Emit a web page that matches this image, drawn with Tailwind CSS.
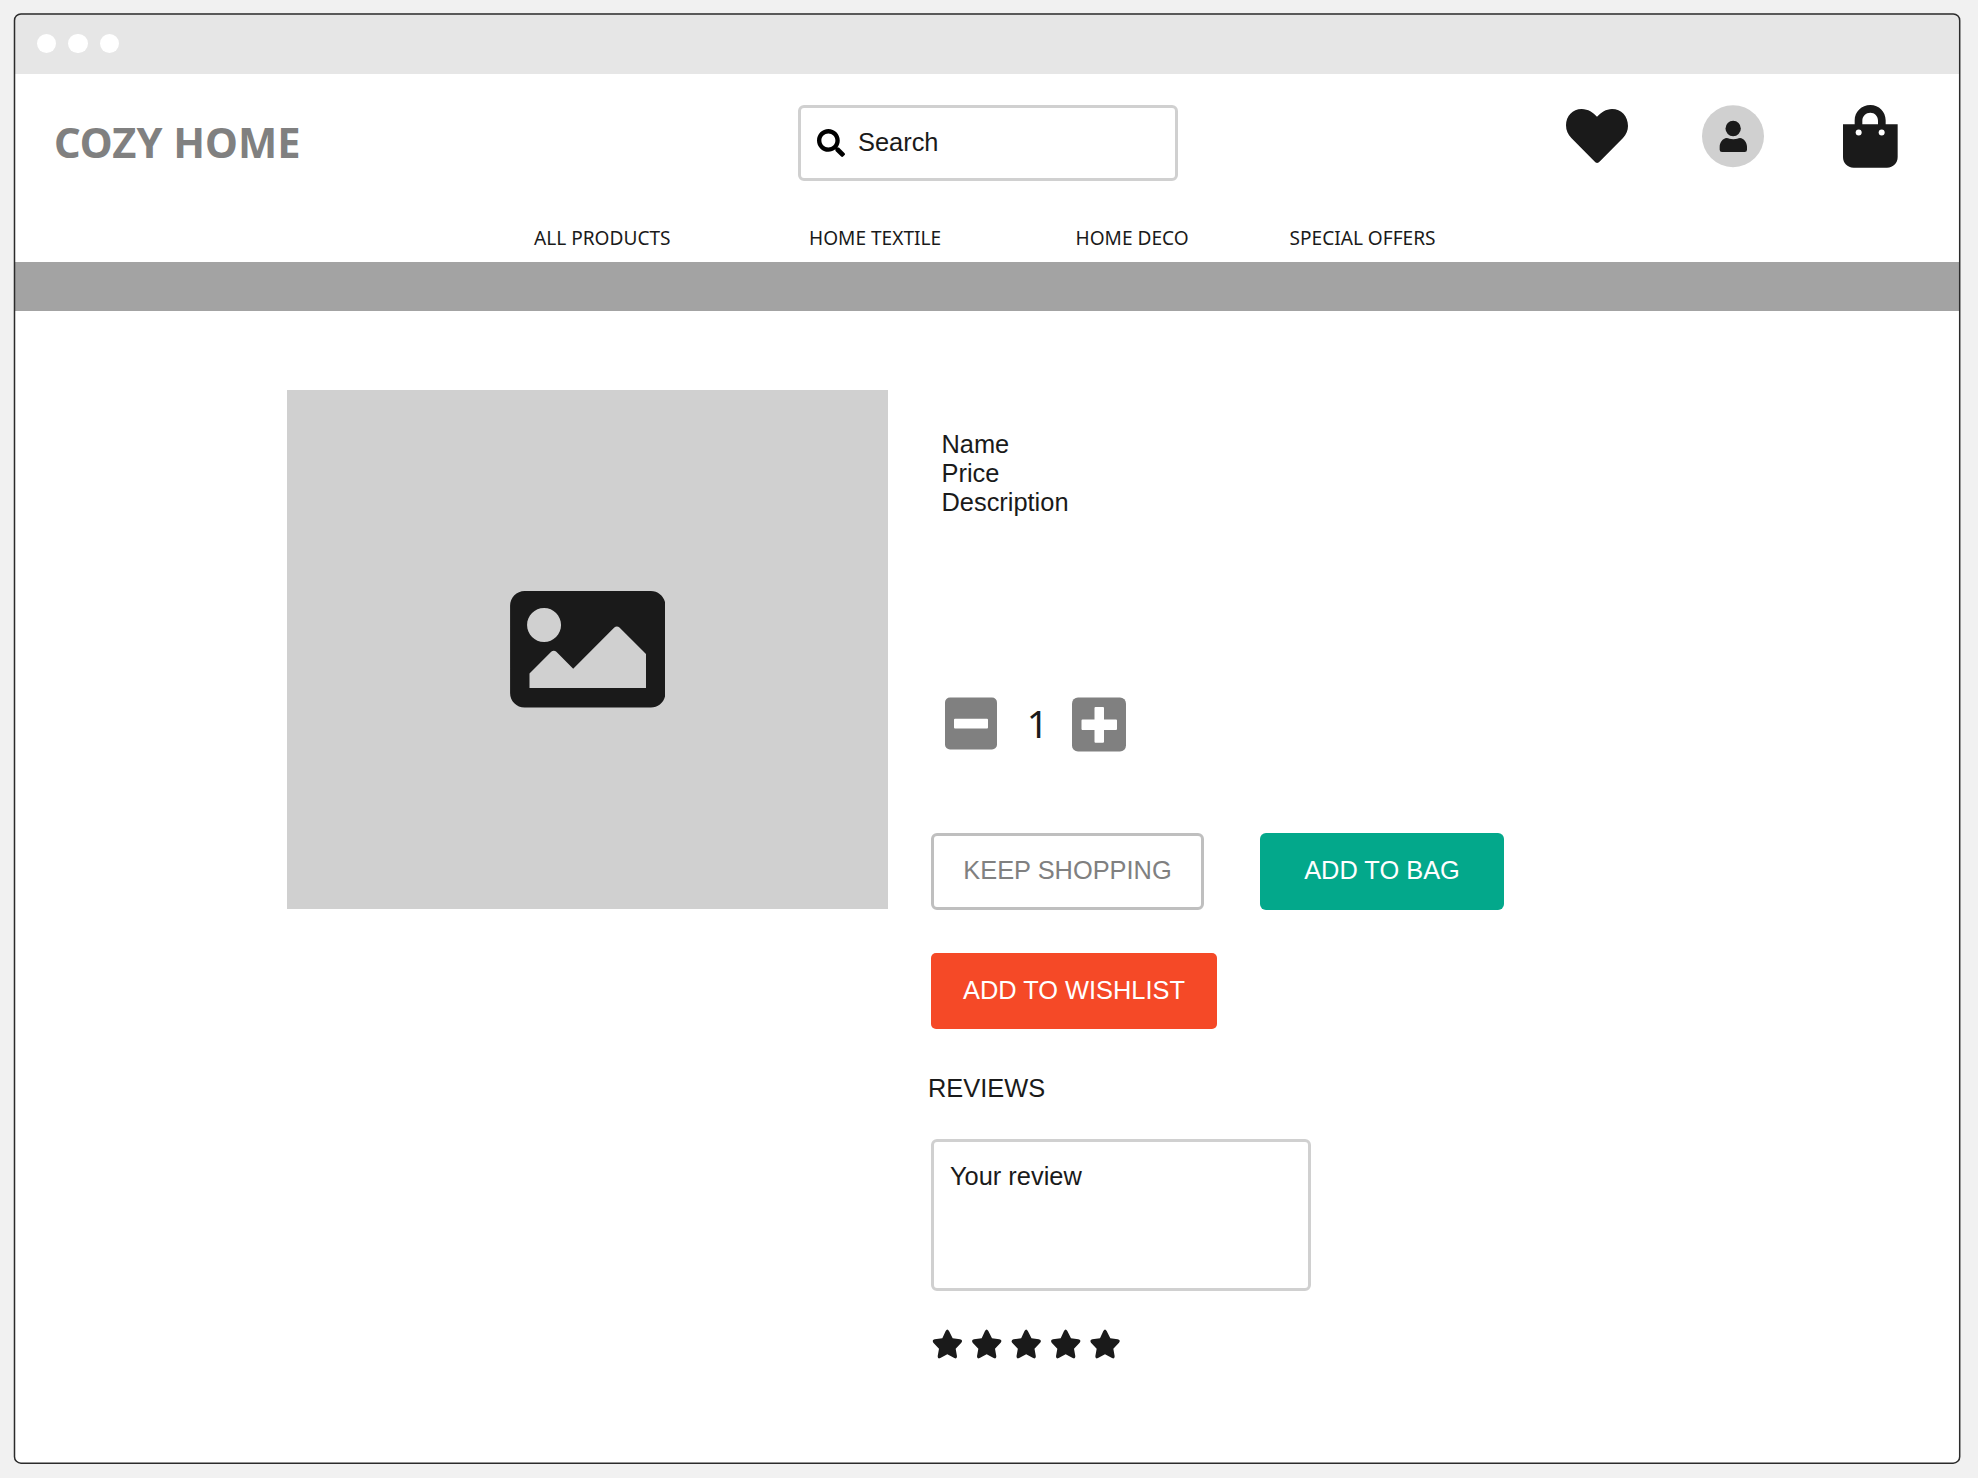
<!DOCTYPE html>
<html lang="en">
<head>
<meta charset="utf-8">
<title>Cozy Home</title>
<script src="https://cdn.jsdelivr.net/npm/@tailwindcss/browser@4"></script>
</head>
<body class="relative h-[1478px] w-[1978px] overflow-hidden bg-[#f1f1f1] pt-[13px] pl-[14px] font-['Liberation_Sans',Arial,sans-serif] text-[25.4px] leading-[29px] text-[#1a1a1a]">
<div class="flex h-[1451px] w-[1946px] flex-col overflow-hidden rounded-[7px] bg-white">
  <!-- window bar -->
  <div class="flex h-[61px] shrink-0 items-center gap-[12px] bg-[#e6e6e6] pl-[22.500px]">
    <span class="size-[19.500px] rounded-full bg-white"></span>
    <span class="size-[19.500px] rounded-full bg-white"></span>
    <span class="size-[19.500px] rounded-full bg-white"></span>
  </div>

  <!-- header -->
  <header class="flex h-[188px] shrink-0 flex-col">
    <div class="flex items-start pt-[31px]">
      <h1 class="ml-[40px] w-[744px] pt-[12px] font-['Noto_Sans',sans-serif] text-[41.6px] leading-[50px] font-bold whitespace-nowrap text-[#808080]">COZY HOME</h1>
      <div class="flex h-[76px] w-[380px] items-center rounded-[6px] border-[3px] border-[#d0d0d0] pl-[16px]">
        <svg class="size-[28px] fill-black" viewBox="0 0 512 512"><path d="M505 442.7L405.3 343c-4.5-4.5-10.6-7-17-7H372c27.6-35.3 44-79.7 44-128C416 93.1 322.9 0 208 0S0 93.1 0 208s93.1 208 208 208c48.3 0 92.7-16.4 128-44v16.3c0 6.4 2.5 12.5 7 17l99.7 99.7c9.4 9.4 24.6 9.4 33.9 0l28.3-28.3c9.4-9.4 9.4-24.6.1-34zM208 336c-70.7 0-128-57.2-128-128 0-70.7 57.2-128 128-128 70.7 0 128 57.2 128 128 0 70.7-57.2 128-128 128z"/></svg>
        <span class="ml-[13px] pb-[2px]">Search</span>
      </div>
      <svg class="ml-[388px] h-[64px] w-[62px]" viewBox="78 75 186 192" fill="#1a1a1a"><path d="M171 110C159 98 145 87 125 87C98 87 78 108 78 136C78 152 84 164 94 174L163 244Q171 254 180 244L249 174C259 163 264 152 264 138C264 108 244 87 216 87C198 87 183 98 171 110Z"/></svg>
      <svg class="ml-[74px] h-[64px] w-[62px]" viewBox="486 75 186 192" fill="#1a1a1a"><circle cx="579" cy="168.500" r="93" fill="#d0d0d0"/><circle cx="579.5" cy="145.500" r="23"/><path d="M560 174C566 174 570 178 580 178C590 178 594 174 600 174C612 175 621 188 621 200V209Q621 216 614 216H546Q539 216 539 209V200C539 188 548 175 560 174Z"/></svg>
      <svg class="ml-[79px] h-[64px] w-[55px]" viewBox="909 75 165 192" fill="#1a1a1a"><path fill-rule="evenodd" d="M909 133H944V121C944 95 965 75 991 75S1037 95 1037 121V133H1073V231C1073 249 1060 263 1041 263H941C922 263 909 249 909 231ZM967 133H1014V122C1014 108 1004 98 991 98S967 108 967 122Z"/><circle cx="956" cy="157.500" r="9" fill="#fff"/><circle cx="1025" cy="157.500" r="9" fill="#fff"/></svg>
    </div>
    <nav class="mt-[43px] flex pl-[520px] font-['Noto_Sans',sans-serif] text-[19.1px] leading-[28px] whitespace-nowrap">
      <a class="w-[275px]">ALL PRODUCTS</a>
      <a class="w-[266.500px]">HOME TEXTILE</a>
      <a class="w-[214px]">HOME DECO</a>
      <a>SPECIAL OFFERS</a>
    </nav>
  </header>
  <div class="h-[48.500px] shrink-0 bg-[#a3a3a3]"></div>

  <!-- product -->
  <main class="flex grow pt-[79.500px] pl-[273px]">
    <div class="flex h-[518.500px] w-[601px] shrink-0 items-center justify-center bg-[#d0d0d0]">
      <svg class="h-[116.500px] w-[155.500px]" viewBox="0 64 512 384" fill="#1a1a1a"><path d="M464 448H48c-26.510 0-48-21.490-48-48V112c0-26.510 21.490-48 48-48h416c26.510 0 48 21.490 48 48v288c0 26.510-21.490 48-48 48zM112 120c-30.928 0-56 25.072-56 56s25.072 56 56 56 56-25.072 56-56-25.072-56-56-56zM64 384h384V272l-87.515-87.515c-4.686-4.686-12.284-4.686-16.971 0L208 320l-55.515-55.515c-4.686-4.686-12.284-4.686-16.971 0L64 336v48z"/></svg>
    </div>
    <section class="ml-[43px] flex flex-col items-start pt-[40px]">
      <div class="ml-[10.500px]">
        <p>Name</p>
        <p>Price</p>
        <p>Description</p>
      </div>
      <div class="mt-[180px] ml-[14px] flex h-[55px] items-start">
        <svg class="size-[53px] w-[52px]" viewBox="0 0 52 53"><rect y=".5" width="52" height="52" rx="5" fill="#808080"/><rect x="9" y="21.700" width="34" height="9.800" rx="1" fill="#fff"/></svg>
        <span class="w-[75px] pt-[6px] pl-[6px] text-center font-['Noto_Sans',sans-serif] text-[38px] leading-[40px]">1</span>
        <svg class="h-[55px] w-[54px]" viewBox="0 0 54 55"><rect y=".5" width="54" height="54" rx="6" fill="#808080"/><path d="M23.500 10h7.500q1 0 1 1v11.500h12q1 0 1 1v8.500q0 1-1 1h-12v11.700q0 1-1 1h-7.500q-1 0-1-1v-11.700h-12q-1 0-1-1v-8.500q0-1 1-1h12v-11.500q0-1 1-1z" fill="#fff"/></svg>
      </div>
      <div class="mt-[81px] flex gap-[56px]">
        <button class="h-[77px] w-[273px] rounded-[6px] border-[3px] border-[#bfbfbf] pb-[2px] whitespace-nowrap text-[#808080]">KEEP SHOPPING</button>
        <button class="h-[77px] w-[244px] rounded-[6px] bg-[#03a88b] pb-[2px] whitespace-nowrap text-white">ADD TO BAG</button>
      </div>
      <button class="mt-[43px] h-[76px] w-[286px] rounded-[5px] bg-[#f54927] pb-[2px] whitespace-nowrap text-white">ADD TO WISHLIST</button>
      <h2 class="mt-[45px] -ml-[3px]">REVIEWS</h2>
      <div class="mt-[36px] h-[152px] w-[380px] rounded-[6px] border-[3px] border-[#d0d0d0] pt-[20px] pl-[16px]">Your review</div>
      <svg class="mt-[36px] h-[36px] w-[200px]" viewBox="0 0 600 108" fill="#1a1a1a">
        <defs><path id="star" d="M41 11Q46 2 51 11L62 33L84 36Q94 39 88 46L71 64L75 87Q75 96 67 92L46 81L25 92Q17 96 17 87L21 64L4 46Q-1 39 8 36L31 33Z"/></defs>
        <use href="#star" x="3" y="1"/><use href="#star" x="121" y="1"/><use href="#star" x="239.500" y="1"/><use href="#star" x="358" y="1"/><use href="#star" x="476" y="1"/>
      </svg>
    </section>
  </main>
</div>
<!-- window outline -->
<svg class="pointer-events-none absolute inset-0" width="1978" height="1478" fill="none"><rect x="14.500" y="13.900" width="1945.200" height="1449.300" rx="6.500" stroke="#2b2b2b" stroke-width="1.500"/></svg>
</body>
</html>
